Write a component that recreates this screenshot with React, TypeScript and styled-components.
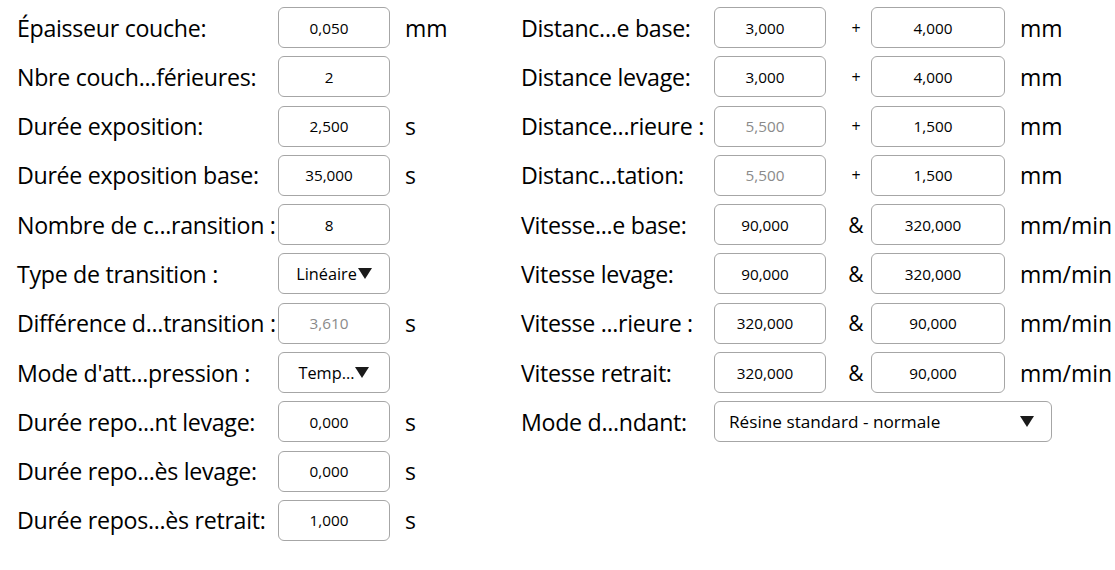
import styled, { createGlobalStyle } from 'styled-components';

const GlobalStyle = createGlobalStyle`
  body {
    margin: 0;
    background: #fff;
    font-family: "Open Sans", "Noto Sans", "Liberation Sans", sans-serif;
    color: #000;
  }
`;

interface LeftRow {
  label: string;
  value: string;
  unit?: string;
  disabled?: boolean;
  select?: boolean;
}

interface RightRow {
  label: string;
  a: string;
  b: string;
  sep: string;
  unit: string;
  disabledA?: boolean;
}

const leftRows: LeftRow[] = [
  { label: 'Épaisseur couche:', value: '0,050', unit: 'mm' },
  { label: 'Nbre couch...férieures:', value: '2' },
  { label: 'Durée exposition:', value: '2,500', unit: 's' },
  { label: 'Durée exposition base:', value: '35,000', unit: 's' },
  { label: 'Nombre de c...ransition :', value: '8' },
  { label: 'Type de transition :', value: 'Linéaire', select: true },
  { label: 'Différence d...transition :', value: '3,610', unit: 's', disabled: true },
  { label: "Mode d'att...pression :", value: 'Temp...', select: true },
  { label: 'Durée repo...nt levage:', value: '0,000', unit: 's' },
  { label: 'Durée repo...ès levage:', value: '0,000', unit: 's' },
  { label: 'Durée repos...ès retrait:', value: '1,000', unit: 's' },
];

const rightRows: RightRow[] = [
  { label: 'Distanc...e base:', a: '3,000', b: '4,000', sep: '+', unit: 'mm' },
  { label: 'Distance levage:', a: '3,000', b: '4,000', sep: '+', unit: 'mm' },
  { label: 'Distance...rieure :', a: '5,500', b: '1,500', sep: '+', unit: 'mm', disabledA: true },
  { label: 'Distanc...tation:', a: '5,500', b: '1,500', sep: '+', unit: 'mm', disabledA: true },
  { label: 'Vitesse...e base:', a: '90,000', b: '320,000', sep: '&', unit: 'mm/min' },
  { label: 'Vitesse levage:', a: '90,000', b: '320,000', sep: '&', unit: 'mm/min' },
  { label: 'Vitesse ...rieure :', a: '320,000', b: '90,000', sep: '&', unit: 'mm/min' },
  { label: 'Vitesse retrait:', a: '320,000', b: '90,000', sep: '&', unit: 'mm/min' },
];

export default function App() {
  return (
    <>
      <GlobalStyle />
      <Page>
        <Column $width={504}>
          {leftRows.map((row) => (
            <Row key={row.label}>
              <Label $width={261}>{row.label}</Label>
              {row.select ? (
                <SmallSelect>
                  <span>{row.value}</span>
                  <Arrow />
                </SmallSelect>
              ) : (
                <Field $width={112} $disabled={row.disabled}>{row.value}</Field>
              )}
              {row.unit && <Unit>{row.unit}</Unit>}
            </Row>
          ))}
        </Column>
        <Column $width={594}>
          {rightRows.map((row) => (
            <Row key={row.label}>
              <Label $width={193}>{row.label}</Label>
              <Field $width={112} $disabled={row.disabledA}>{row.a}</Field>
              <Sep $big={row.sep === '&'}>{row.sep}</Sep>
              <Field $width={134}>{row.b}</Field>
              <Unit>{row.unit}</Unit>
            </Row>
          ))}
          <Row>
            <Label $width={193}>Mode d...ndant:</Label>
            <WideSelect>
              <span>Résine standard - normale</span>
              <Arrow />
            </WideSelect>
          </Row>
        </Column>
      </Page>
    </>
  );
}

const Page = styled.div`
  display: flex;
  padding: 7px 0 0 17px;
  width: 1115px;
  height: 570px;
  box-sizing: border-box;
  overflow: hidden;
`;

const Column = styled.div<{ $width: number }>`
  display: flex;
  flex-direction: column;
  gap: 8.3px;
  width: ${(p) => p.$width}px;
  flex-shrink: 0;
`;

const Row = styled.div`
  display: flex;
  align-items: center;
  height: 41px;
`;

const Label = styled.div<{ $width: number }>`
  position: relative;
  z-index: 1;
  width: ${(p) => p.$width}px;
  flex-shrink: 0;
  font-size: 23.2px;
  letter-spacing: -0.3px;
  white-space: nowrap;
`;

const Box = styled.div`
  height: 41px;
  box-sizing: border-box;
  border: 1px solid #a6a6a6;
  border-radius: 6px;
  background: #fff;
  display: flex;
  align-items: center;
  font-size: 15.3px;
  flex-shrink: 0;
`;

const Field = styled(Box)<{ $width: number; $disabled?: boolean }>`
  width: ${(p) => p.$width}px;
  justify-content: center;
  padding-right: 10px;
  color: ${(p) => (p.$disabled ? '#8a8a8a' : '#000')};
`;

const SmallSelect = styled(Box)`
  width: 112px;
  justify-content: center;
  gap: 1px;
  font-size: 16.3px;
`;

const WideSelect = styled(Box)`
  width: 338px;
  justify-content: space-between;
  padding: 0 17px 0 14px;
  font-size: 17.2px;
`;

const Arrow = styled.span`
  width: 0;
  height: 0;
  border-left: 7.5px solid transparent;
  border-right: 7.5px solid transparent;
  border-top: 11px solid #1a1a1a;
`;

const Sep = styled.div<{ $big?: boolean }>`
  width: 45px;
  padding-left: 15px;
  box-sizing: border-box;
  text-align: center;
  font-size: ${(p) => (p.$big ? '21px' : '16px')};
  flex-shrink: 0;
`;

const Unit = styled.div`
  margin-left: 15px;
  font-size: 23px;
  white-space: nowrap;
`;
